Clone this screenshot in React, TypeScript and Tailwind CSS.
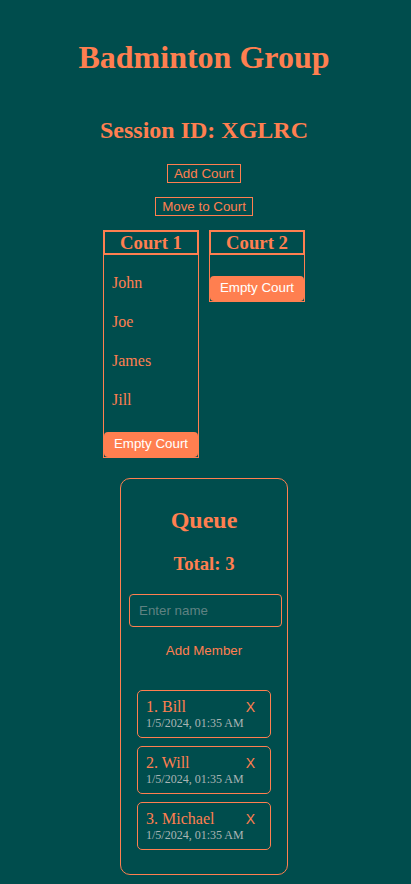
import React from 'react';

const serif = { fontFamily: '"Liberation Serif", "Times New Roman", serif' };
const sans = { fontFamily: '"Liberation Sans", Arial, sans-serif' };

const courts = [
  { name: 'Court 1', players: ['John', 'Joe', 'James', 'Jill'] },
  { name: 'Court 2', players: [] as string[] },
];

const queue = [
  { name: 'Bill', time: '1/5/2024, 01:35 AM' },
  { name: 'Will', time: '1/5/2024, 01:35 AM' },
  { name: 'Michael', time: '1/5/2024, 01:35 AM' },
];

function Court({ name, players }: { name: string; players: string[] }) {
  return (
    <div className="w-[96px]">
      <div className="border-2 border-[#ff7f50] text-center text-[18.72px] leading-[21px] font-bold text-[#ff7f50]">
        {name}
      </div>
      <div className="border border-t-0 border-[#ff7f50]">
        <div className="py-[10px]">
          {players.map((p) => (
            <div key={p} className="h-[39px] pt-[9px] pl-2 text-[16px] leading-[18px] text-[#ff7f50]">
              {p}
            </div>
          ))}
        </div>
        <button className="w-full h-[25px] rounded-[4px] bg-[#ff7f50] text-white text-[13.33px]" style={sans}>
          Empty Court
        </button>
      </div>
    </div>
  );
}

export default function App() {
  return (
    <div className="min-h-[884px] w-full bg-[#004d4d]" style={serif}>
      <div className="w-[408px] flex flex-col items-center pt-[39px] pb-[9px]">
        <h1 className="text-[32px] leading-[37px] font-bold text-[#ff7f50]">Badminton Group</h1>
        <h2 className="mt-[40px] text-[24px] leading-[28px] font-bold text-[#ff7f50]">Session ID: XGLRC</h2>

        <button
          className="mt-[20px] border border-[#ff7f50] px-[6px] h-[19px] text-[13.33px] leading-[15px] text-[#ff7f50]"
          style={sans}
        >
          Add Court
        </button>
        <button
          className="mt-[14px] border border-[#ff7f50] px-[6px] h-[19px] text-[13.33px] leading-[15px] text-[#ff7f50]"
          style={sans}
        >
          Move to Court
        </button>

        <div className="mt-[14px] flex items-start gap-[10px]">
          {courts.map((c) => (
            <Court key={c.name} name={c.name} players={c.players} />
          ))}
        </div>

        <div className="mt-[20px] w-[168px] rounded-[10px] border border-[#ff7f50] px-2 pt-[27px] pb-[24px] flex flex-col items-center">
          <h2 className="text-[24px] leading-[28px] font-bold text-[#ff7f50]">Queue</h2>
          <h3 className="mt-[19px] text-[18.72px] leading-[22px] font-bold text-[#ff7f50]">Total: 3</h3>
          <input
            placeholder="Enter name"
            className="mt-[19px] self-start w-[153px] h-[33px] rounded-[4px] border border-[#ff7f50] bg-transparent px-[9px] text-[13.33px] text-[#ff7f50] placeholder:text-[#5f8282] outline-none"
            style={sans}
          />
          <button className="mt-[16px] text-[13.33px] leading-[15px] text-[#ff7f50]" style={sans}>
            Add Member
          </button>

          <div className="mt-[32px] w-[134px] flex flex-col gap-2">
            {queue.map((m, i) => (
              <div key={m.name} className="rounded-[5px] border border-[#ff7f50] pl-2 pr-[15px] py-[7px]">
                <div className="flex items-center justify-between h-[18px]">
                  <span className="text-[16px] leading-[18px] text-[#ff7f50]">
                    {i + 1}. {m.name}
                  </span>
                  <button className="text-[14px] leading-[16px] text-[#ff7f50]" style={sans}>
                    X
                  </button>
                </div>
                <div className="text-[12px] leading-[14px] text-[#aab4b4]">{m.time}</div>
              </div>
            ))}
          </div>
        </div>
      </div>
    </div>
  );
}
